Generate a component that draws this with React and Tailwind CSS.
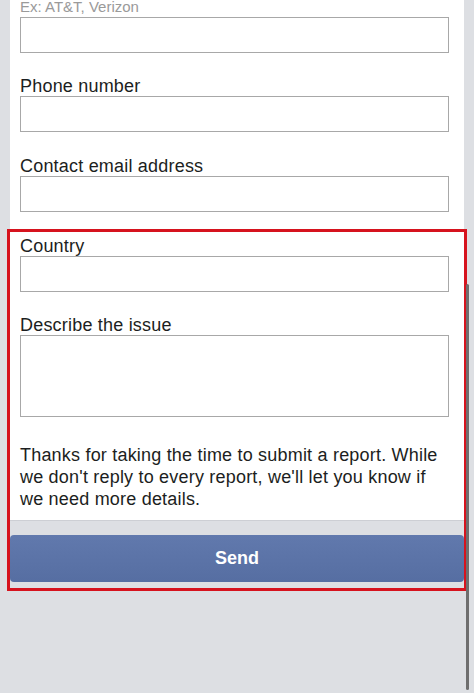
import React from 'react'

function Field({ label, tall, gap = 'mt-6' }) {
  return (
    <div className={gap}>
      <div className="text-[18px] leading-[19px] tracking-[0.2px] text-[#1c1e21]">{label}</div>
      {tall ? (
        <textarea className="block w-full h-[82px] border border-[#a8a8a8] bg-white resize-none outline-none" />
      ) : (
        <input type="text" className="block w-full h-[36px] border border-[#a8a8a8] bg-white outline-none" />
      )}
    </div>
  )
}

export default function App() {
  return (
    <div
      className="relative h-[693px] w-full overflow-hidden bg-[#dddfe3]"
      style={{ fontFamily: '"Liberation Sans", Arial, sans-serif' }}
    >
      <div className="px-[10px]">
        {/* form card */}
        <div className="bg-white pl-[10px] pr-[15px] pb-[10px] border-b border-[#cdcfd4]">
          <div className="text-[15px] leading-[14px] text-[#9a9a9a]">Ex: AT&amp;T, Verizon</div>
          <input type="text" className="block w-full mt-[3px] h-[36px] border border-[#a8a8a8] bg-white outline-none" />

          <Field label="Phone number" />
          <Field label="Contact email address" gap="mt-[25px]" />
          <Field label="Country" gap="mt-[25px]" />
          <Field label="Describe the issue" tall />

          <p className="mt-[27px] text-[18px] leading-[22px] tracking-[0.2px] text-[#1c1e21]">
            Thanks for taking the time to submit a report. While we don't reply to every report, we'll let you know if we need more details.
          </p>
        </div>

        <button className="mt-[14px] h-[47px] w-full rounded-[4px] bg-gradient-to-b from-[#6179ad] to-[#566ea2] text-[18px] font-bold text-white">
          Send
        </button>
      </div>

      {/* red highlight annotation */}
      <div className="pointer-events-none absolute left-[7px] top-[229px] h-[362px] w-[460px] border-[3px] border-[#d6131e]" />

      {/* scroll indicator */}
      <div className="absolute left-[466px] top-[284px] h-[406px] w-[3px] rounded-full bg-[#6e6e6e]" />
    </div>
  )
}
